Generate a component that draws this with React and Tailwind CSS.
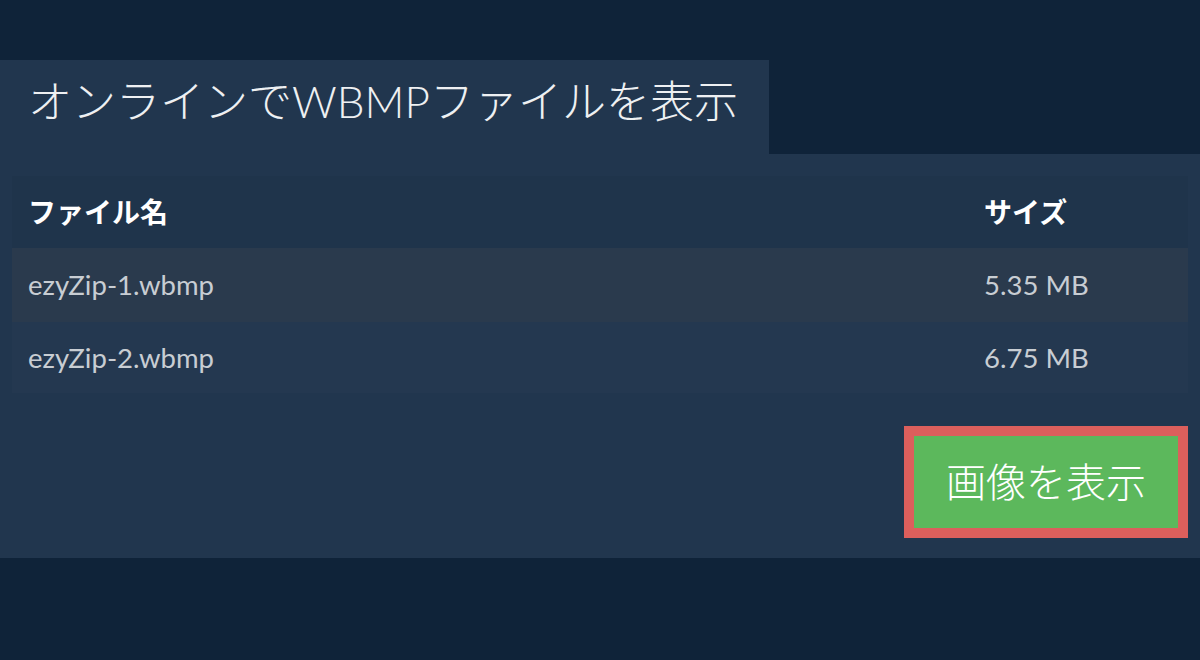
export default function App() {
  const font = { fontFamily: 'Lato, "Noto Sans CJK JP", sans-serif' };
  const rows = [
    { name: "ezyZip-1.wbmp", size: "5.35 MB", bg: "bg-[#2a3a4d]", h: "h-[74px]" },
    { name: "ezyZip-2.wbmp", size: "6.75 MB", bg: "bg-[#243850]", h: "h-[71px]" },
  ];
  return (
    <div className="w-[1200px] h-[660px] bg-[#0f2339] pt-[60px]" style={font}>
      <div className="w-[769px] h-[94px] bg-[#21364e] flex items-center pl-[28px] pb-[12px]">
        <h1 className="text-[44px] font-light text-[#eef0f2] leading-none">オンラインでWBMPファイルを表示</h1>
      </div>
      <div className="bg-[#21364e] px-[12px] pt-[22px] pb-[20px] flex flex-col">
        <div className="flex flex-col">
          <div className="h-[72px] bg-[#1f344b] flex items-center">
            <div className="flex-1 pl-[16px] text-[28px] font-bold text-white">ファイル名</div>
            <div className="w-[216px] pl-[12px] text-[28px] font-bold text-white">サイズ</div>
          </div>
          {rows.map((r) => (
            <div key={r.name} className={`${r.h} ${r.bg} flex items-center`}>
              <div className="flex-1 pl-[16px] text-[27.5px] text-[#c8cdd3]">{r.name}</div>
              <div className="w-[216px] pl-[12px] text-[27.5px] text-[#c8cdd3]">{r.size}</div>
            </div>
          ))}
        </div>
        <div className="flex justify-end mt-[33px]">
          <button className="w-[284px] h-[112px] border-[10px] border-[#dc5f5c] bg-[#5cb85c] text-white text-[40px] font-light flex items-center justify-center">
            画像を表示
          </button>
        </div>
      </div>
    </div>
  );
}
